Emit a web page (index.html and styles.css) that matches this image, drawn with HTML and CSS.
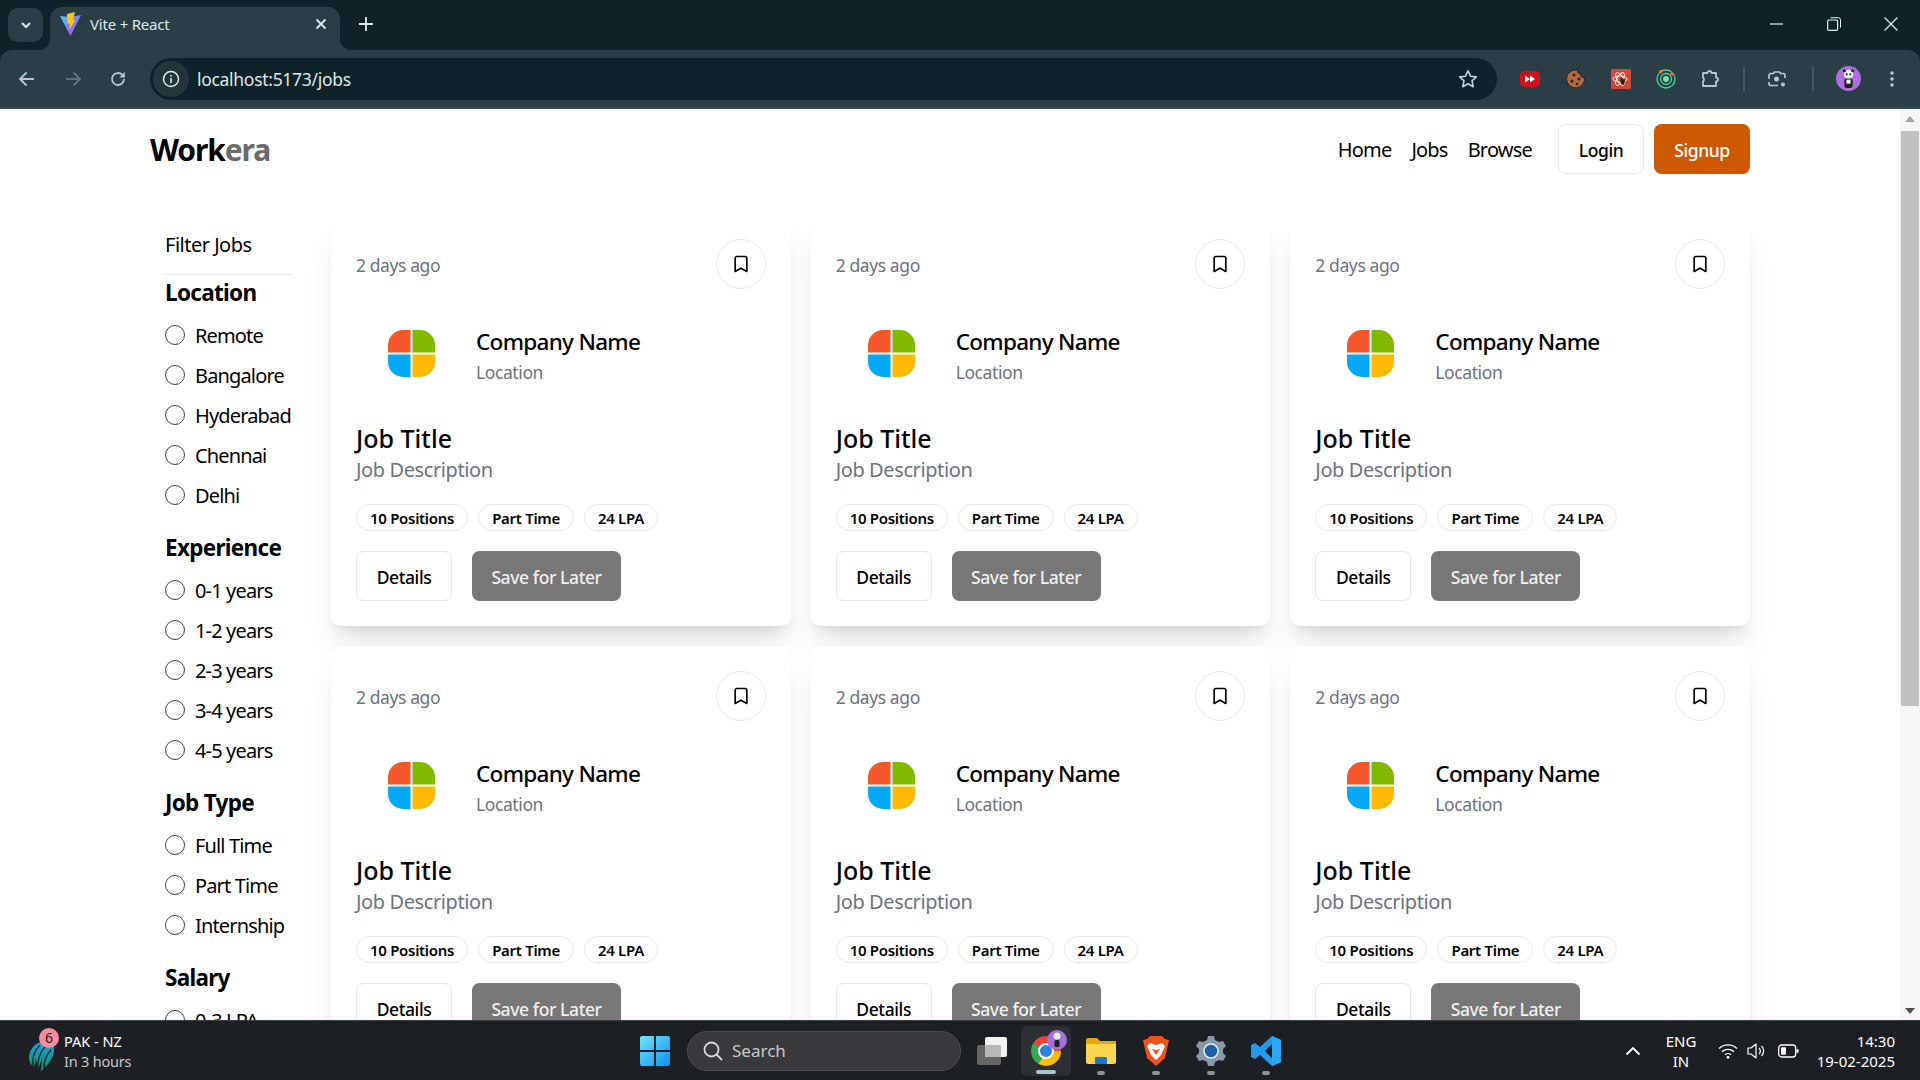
FILE: index.html
```html
<!DOCTYPE html>
<html>
<head>
  <title>Vite + React</title>
  <link rel="stylesheet" href="styles.css">
</head>
<body>
  <svg class="defs" width="0" height="0">
    <defs>
      <clipPath id="logo-clip"><rect width="47" height="47" rx="15"/></clipPath>
      <symbol id="logo" viewBox="0 0 47 47">
        <g clip-path="url(#logo-clip)">
          <rect width="22.5" height="22.5" fill="#f4572a"/>
          <rect x="24.5" width="22.5" height="22.5" fill="#7fba00"/>
          <rect y="24.5" width="22.5" height="22.5" fill="#03a9f4"/>
          <rect x="24.5" y="24.5" width="22.5" height="22.5" fill="#ffb900"/>
        </g>
      </symbol>
      <symbol id="bookmark" viewBox="0 0 24 24">
        <path d="m19 21-7-4-7 4V5a2 2 0 0 1 2-2h10a2 2 0 0 1 2 2v16z" fill="none" stroke="#000" stroke-width="2" stroke-linejoin="round"/>
      </symbol>
    </defs>
  </svg>

  <!-- browser top -->
  <div class="tabstrip">
    <div class="tab-search">
      <svg width="14" height="14" viewBox="0 0 14 14"><path d="M3 5l4 4 4-4" fill="none" stroke="#dfe8ea" stroke-width="2"/></svg>
    </div>
    <div class="tab">
      <svg class="favicon" width="21" height="24" viewBox="0 0 21 24">
        <defs>
          <linearGradient id="vite" x1="0" y1="0" x2="1" y2="1"><stop offset="0" stop-color="#41d1ff"/><stop offset="1" stop-color="#bd34fe"/></linearGradient>
        </defs>
        <path d="M0 4l10.5 20L21 3 10.5 5z" fill="url(#vite)"/>
        <path d="M15 0L7 2l.5 10 2.5-.5-.5 6L15.500 8l-2.500.5z" fill="#ffc517"/>
      </svg>
      <span class="tab-title">Vite + React</span>
      <svg class="tab-close" width="12" height="12" viewBox="0 0 12 12"><path d="M1.500 1.500l9 9m0-9l-9 9" stroke="#dfe8ea" stroke-width="1.800"/></svg>
    </div>
    <svg class="new-tab" width="14" height="14" viewBox="0 0 14 14"><path d="M7 0v14M0 7h14" stroke="#dfe8ea" stroke-width="1.800"/></svg>
    <div class="window-btns">
      <svg width="14" height="14" viewBox="0 0 14 14"><path d="M0 7h13" stroke="#e6eeef" stroke-width="1.200"/></svg>
      <svg width="14" height="14" viewBox="0 0 14 14"><rect x=".6" y="3" width="10" height="10.400" rx="1.500" fill="none" stroke="#e6eeef" stroke-width="1.200"/><path d="M3.500 .7h8a2 2 0 0 1 2 2v8" fill="none" stroke="#e6eeef"/></svg>
      <svg width="14" height="14" viewBox="0 0 14 14"><path d="M.5.500l13 13m0-13l-13 13" stroke="#e6eeef" stroke-width="1.200"/></svg>
    </div>
  </div>

  <div class="toolbar">
    <div class="nav-btns">
      <svg width="18" height="18" viewBox="0 0 18 18"><path d="M16 9H2m6.500-6.500L2 9l6.500 6.500" fill="none" stroke="#b9c7ca" stroke-width="1.800"/></svg>
      <svg width="18" height="18" viewBox="0 0 18 18"><path d="M2 9h14M9.500 2.500L16 9l-6.500 6.500" fill="none" stroke="#5f7277" stroke-width="1.800"/></svg>
      <svg width="18" height="18" viewBox="0 0 18 18"><path d="M15 9a6 6 0 1 1-1.800-4.300L15 6.500" fill="none" stroke="#b9c7ca" stroke-width="1.800"/><path d="M15.800 2v5.500h-5.500z" fill="#b9c7ca"/></svg>
    </div>
    <div class="omnibox">
      <div class="site-info">
        <svg width="18" height="18" viewBox="0 0 18 18"><circle cx="9" cy="9" r="7.500" fill="none" stroke="#dfe8ea" stroke-width="1.500"/><path d="M9 8v5M9 5v1.600" stroke="#dfe8ea" stroke-width="1.600"/></svg>
      </div>
      <span class="url">localhost:5173/jobs</span>
      <svg class="star" width="20" height="20" viewBox="0 0 20 20"><path d="M10 1.800l2.500 5.400 5.800.7-4.300 4 1.200 5.800-5.200-2.900-5.200 2.900 1.200-5.800-4.300-4 5.800-.7z" fill="none" stroke="#c6d3d6" stroke-width="1.600" stroke-linejoin="round"/></svg>
    </div>
    <div class="ext-icons">
      <svg width="22" height="18" viewBox="0 0 22 18"><rect x="1" y="1" width="20" height="16" rx="5" fill="#d3111c"/><path d="M6 5.500l5 3.500-5 3.500zM11 5.500l5 3.500-5 3.500z" fill="#fff"/></svg>
      <svg width="20" height="20" viewBox="0 0 20 20"><path d="M11 1a4 4 0 0 0 3.500 4 3 3 0 0 0 4 3.500A9 9 0 1 1 11 1z" fill="#b5683f" stroke="#1d1d1d" stroke-width=".8"/><circle cx="8" cy="6" r="1.500" fill="#222"/><circle cx="13" cy="10" r="1.500" fill="#222"/><circle cx="6" cy="12" r="1.500" fill="#222"/><circle cx="11" cy="15" r="1.300" fill="#222"/></svg>
      <svg width="20" height="20" viewBox="0 0 20 20"><rect width="20" height="20" rx="1.500" fill="#d4483a"/><g fill="none" stroke="#fff" stroke-width=".9"><ellipse cx="9" cy="10" rx="7" ry="3"/><ellipse cx="9" cy="10" rx="7" ry="3" transform="rotate(60 9 10)"/><ellipse cx="9" cy="10" rx="7" ry="3" transform="rotate(120 9 10)"/></g><path d="M10 8l4 3-1 5-3-1-1-4z" fill="#2a2020"/></svg>
      <svg width="20" height="20" viewBox="0 0 20 20"><circle cx="10" cy="10" r="9" fill="none" stroke="#4ed39a" stroke-width="1.300"/><circle cx="10" cy="10" r="5.500" fill="none" stroke="#4ed39a" stroke-width="1.300"/><circle cx="10" cy="10" r="3" fill="#6ce9ad"/><circle cx="5" cy="2.500" r="1.800" fill="#f0792b"/><circle cx="15.500" cy="5" r="1.800" fill="#ea5a2e"/></svg>
      <svg width="20" height="20" viewBox="0 0 20 20"><path d="M2 4h4.500a2 2 0 0 1 4 0H15v4.500a2 2 0 0 1 0 4V17H2v-4.500a2.500 2.500 0 0 0 0-4z" fill="none" stroke="#b9c7ca" stroke-width="1.800" stroke-linejoin="round"/></svg>
      <span class="ext-divider"></span>
      <svg class="ext-lens" width="20" height="20" viewBox="0 0 20 20"><path d="M2 10V6.500A2 2 0 0 1 4 4.500h2.500l1-1.500h5l1 1.500H16a2 2 0 0 1 2 2V9M2 13v1.500a2 2 0 0 0 2 2h7" fill="none" stroke="#b9c7ca" stroke-width="1.700"/><circle cx="9.500" cy="10" r="2.500" fill="#b9c7ca"/><circle cx="16" cy="15.500" r="2" fill="#b9c7ca"/></svg>
      <span class="ext-divider"></span>
      <div class="avatar">
        <svg width="25" height="25" viewBox="0 0 24 24"><circle cx="12" cy="8" r="4.500" fill="#f2f2f2"/><circle cx="8" cy="4.500" r="1.500" fill="#222"/><circle cx="16" cy="4.500" r="1.500" fill="#222"/><circle cx="10.300" cy="8" r="1" fill="#222"/><circle cx="13.700" cy="8" r="1" fill="#222"/><rect x="8" y="12" width="8" height="9" rx="2" fill="#222"/><rect x="10" y="13" width="4" height="4" fill="#eee"/></svg>
      </div>
      <svg class="ext-menu" width="4" height="18" viewBox="0 0 4 18"><circle cx="2" cy="3" r="1.800" fill="#b9c7ca"/><circle cx="2" cy="9" r="1.800" fill="#b9c7ca"/><circle cx="2" cy="15" r="1.800" fill="#b9c7ca"/></svg>
    </div>
  </div>

  <!-- page -->
  <div class="viewport">
    <div class="page">
      <nav class="navbar">
        <h1 class="brand">Work<span>era</span></h1>
        <ul class="nav-links">
          <li>Home</li>
          <li>Jobs</li>
          <li>Browse</li>
        </ul>
        <button class="btn btn-login">Login</button>
        <button class="btn btn-signup">Signup</button>
      </nav>

      <div class="main">
        <aside class="sidebar">
          <p class="filter-title">Filter Jobs</p>
          <hr class="filter-rule">
          <div class="filter-group">
            <h2>Location</h2>
            <label><input type="radio" name="location">Remote</label>
            <label><input type="radio" name="location">Bangalore</label>
            <label><input type="radio" name="location">Hyderabad</label>
            <label><input type="radio" name="location">Chennai</label>
            <label><input type="radio" name="location">Delhi</label>
          </div>
          <div class="filter-group">
            <h2>Experience</h2>
            <label><input type="radio" name="experience">0-1 years</label>
            <label><input type="radio" name="experience">1-2 years</label>
            <label><input type="radio" name="experience">2-3 years</label>
            <label><input type="radio" name="experience">3-4 years</label>
            <label><input type="radio" name="experience">4-5 years</label>
          </div>
          <div class="filter-group">
            <h2>Job Type</h2>
            <label><input type="radio" name="type">Full Time</label>
            <label><input type="radio" name="type">Part Time</label>
            <label><input type="radio" name="type">Internship</label>
          </div>
          <div class="filter-group">
            <h2>Salary</h2>
            <label><input type="radio" name="salary">0-3 LPA</label>
          </div>
        </aside>

        <div class="jobs-grid">
          <div class="job-card">
            <div class="card-top">
              <span class="posted">2 days ago</span>
              <button class="save-icon"><svg width="20" height="20"><use href="#bookmark"/></svg></button>
            </div>
            <div class="company">
              <svg class="company-logo" width="47" height="47"><use href="#logo"/></svg>
              <div>
                <h3 class="company-name">Company Name</h3>
                <p class="company-loc">Location</p>
              </div>
            </div>
            <h2 class="job-title">Job Title</h2>
            <p class="job-desc">Job Description</p>
            <div class="badges">
              <span class="badge">10 Positions</span>
              <span class="badge">Part Time</span>
              <span class="badge">24 LPA</span>
            </div>
            <div class="card-actions">
              <button class="btn btn-details">Details</button>
              <button class="btn btn-save">Save for Later</button>
            </div>
          </div>

          <div class="job-card">
            <div class="card-top">
              <span class="posted">2 days ago</span>
              <button class="save-icon"><svg width="20" height="20"><use href="#bookmark"/></svg></button>
            </div>
            <div class="company">
              <svg class="company-logo" width="47" height="47"><use href="#logo"/></svg>
              <div>
                <h3 class="company-name">Company Name</h3>
                <p class="company-loc">Location</p>
              </div>
            </div>
            <h2 class="job-title">Job Title</h2>
            <p class="job-desc">Job Description</p>
            <div class="badges">
              <span class="badge">10 Positions</span>
              <span class="badge">Part Time</span>
              <span class="badge">24 LPA</span>
            </div>
            <div class="card-actions">
              <button class="btn btn-details">Details</button>
              <button class="btn btn-save">Save for Later</button>
            </div>
          </div>

          <div class="job-card">
            <div class="card-top">
              <span class="posted">2 days ago</span>
              <button class="save-icon"><svg width="20" height="20"><use href="#bookmark"/></svg></button>
            </div>
            <div class="company">
              <svg class="company-logo" width="47" height="47"><use href="#logo"/></svg>
              <div>
                <h3 class="company-name">Company Name</h3>
                <p class="company-loc">Location</p>
              </div>
            </div>
            <h2 class="job-title">Job Title</h2>
            <p class="job-desc">Job Description</p>
            <div class="badges">
              <span class="badge">10 Positions</span>
              <span class="badge">Part Time</span>
              <span class="badge">24 LPA</span>
            </div>
            <div class="card-actions">
              <button class="btn btn-details">Details</button>
              <button class="btn btn-save">Save for Later</button>
            </div>
          </div>

          <div class="job-card">
            <div class="card-top">
              <span class="posted">2 days ago</span>
              <button class="save-icon"><svg width="20" height="20"><use href="#bookmark"/></svg></button>
            </div>
            <div class="company">
              <svg class="company-logo" width="47" height="47"><use href="#logo"/></svg>
              <div>
                <h3 class="company-name">Company Name</h3>
                <p class="company-loc">Location</p>
              </div>
            </div>
            <h2 class="job-title">Job Title</h2>
            <p class="job-desc">Job Description</p>
            <div class="badges">
              <span class="badge">10 Positions</span>
              <span class="badge">Part Time</span>
              <span class="badge">24 LPA</span>
            </div>
            <div class="card-actions">
              <button class="btn btn-details">Details</button>
              <button class="btn btn-save">Save for Later</button>
            </div>
          </div>

          <div class="job-card">
            <div class="card-top">
              <span class="posted">2 days ago</span>
              <button class="save-icon"><svg width="20" height="20"><use href="#bookmark"/></svg></button>
            </div>
            <div class="company">
              <svg class="company-logo" width="47" height="47"><use href="#logo"/></svg>
              <div>
                <h3 class="company-name">Company Name</h3>
                <p class="company-loc">Location</p>
              </div>
            </div>
            <h2 class="job-title">Job Title</h2>
            <p class="job-desc">Job Description</p>
            <div class="badges">
              <span class="badge">10 Positions</span>
              <span class="badge">Part Time</span>
              <span class="badge">24 LPA</span>
            </div>
            <div class="card-actions">
              <button class="btn btn-details">Details</button>
              <button class="btn btn-save">Save for Later</button>
            </div>
          </div>

          <div class="job-card">
            <div class="card-top">
              <span class="posted">2 days ago</span>
              <button class="save-icon"><svg width="20" height="20"><use href="#bookmark"/></svg></button>
            </div>
            <div class="company">
              <svg class="company-logo" width="47" height="47"><use href="#logo"/></svg>
              <div>
                <h3 class="company-name">Company Name</h3>
                <p class="company-loc">Location</p>
              </div>
            </div>
            <h2 class="job-title">Job Title</h2>
            <p class="job-desc">Job Description</p>
            <div class="badges">
              <span class="badge">10 Positions</span>
              <span class="badge">Part Time</span>
              <span class="badge">24 LPA</span>
            </div>
            <div class="card-actions">
              <button class="btn btn-details">Details</button>
              <button class="btn btn-save">Save for Later</button>
            </div>
          </div>
        </div>
      </div>
    </div>

    <div class="scrollbar">
      <span class="arrow-up"></span>
      <div class="scroll-track"><div class="scroll-thumb"></div></div>
      <span class="arrow-down"></span>
    </div>
  </div>

  <!-- windows taskbar -->
  <div class="taskbar">
    <div class="task-news">
      <div class="news-icon">
        <svg width="28" height="36" viewBox="0 0 28 36">
          <defs><linearGradient id="icc" x1="0" y1="0" x2="0" y2="1"><stop offset="0" stop-color="#1aa3e8"/><stop offset="1" stop-color="#0f8f5f"/></linearGradient></defs>
          <path d="M2 22C2 12 10 5 20 5c6 0 8 4 7 10-1 8-8 16-13 20l1-13-4 12-2-12-2 9c-3-2-5-5-5-9z" fill="url(#icc)"/>
          <path d="M6 30C5 22 8 14 13 9M11 33c-1-8 2-17 7-22M17 32c0-7 3-14 7-18" fill="none" stroke="#1c1f24" stroke-width="1.400"/>
        </svg>
        <span class="news-badge">6</span>
      </div>
      <div class="news-text">
        <span>PAK - NZ</span>
        <span class="news-sub">In 3 hours</span>
      </div>
    </div>

    <div class="task-center">
      <svg class="task-win" width="30" height="30" viewBox="0 0 30 30">
        <defs><linearGradient id="win" x1="0" y1="0" x2="1" y2="1"><stop offset="0" stop-color="#6fe3fb"/><stop offset="1" stop-color="#0f92f2"/></linearGradient></defs>
        <path d="M0 2a2 2 0 0 1 2-2h12v14H0zM16 0h12a2 2 0 0 1 2 2v12H16zM0 16h14v14H2a2 2 0 0 1-2-2zM16 16h14v12a2 2 0 0 1-2 2H16z" fill="url(#win)"/>
      </svg>
      <div class="task-search">
        <svg width="22" height="22" viewBox="0 0 22 22"><circle cx="9.500" cy="9.500" r="7" fill="none" stroke="#d8d8d8" stroke-width="1.800"/><path d="M14.500 14.500l5.500 5.500" stroke="#d8d8d8" stroke-width="1.800"/></svg>
        <span>Search</span>
      </div>
      <svg class="task-view" width="30" height="28" viewBox="0 0 30 28"><rect y="8" width="24" height="20" rx="2" fill="#666"/><rect x="8" width="22" height="20" rx="2" fill="#f2f2f2"/><rect x="8" y="8" width="16" height="12" rx="1" fill="#b8b8b8"/></svg>
      <div class="task-chrome">
        <div class="chrome-logo"><span></span></div>
        <div class="chrome-badge">
          <svg width="20" height="20" viewBox="0 0 20 20"><circle cx="10" cy="6" r="3.500" fill="#e8e8e8"/><rect x="7.500" y="10" width="5" height="7" rx="1.500" fill="#222"/></svg>
        </div>
        <i class="task-active"></i>
      </div>
      <div class="task-app">
        <svg width="30" height="26" viewBox="0 0 30 26"><path d="M0 2a2 2 0 0 1 2-2h9l3 3h16v8H0z" fill="#e2a711"/><path d="M0 6h30v18a2 2 0 0 1-2 2H2a2 2 0 0 1-2-2z" fill="#ffd54f"/><rect x="9" y="19" width="12" height="7" rx="1" fill="#1976c9"/></svg>
        <i class="task-dot"></i>
      </div>
      <div class="task-app">
        <svg width="26" height="30" viewBox="0 0 26 30"><path d="M7 0h12l3 3 4 1-2 9-2 9-9 8-9-8-2-9-2-9 4-1z" fill="#f1511b"/><path d="M7 7l6 2 6-2 3 3-4 9-5 5-5-5-4-9z" fill="#fff"/><path d="M9 13l4 1 4-1-4 6z" fill="#f1511b"/></svg>
        <i class="task-dot"></i>
      </div>
      <div class="task-app">
        <svg width="30" height="30" viewBox="0 0 30 30"><path d="M12 0h6l1 4 4 2 4-1 3 5-3 3v4l3 3-3 5-4-1-4 2-1 4h-6l-1-4-4-2-4 1-3-5 3-3v-4L0 10l3-5 4 1 4-2z" fill="#8a97a6"/><circle cx="15" cy="15" r="7" fill="#1d5fa8"/><circle cx="15" cy="15" r="7" fill="none" stroke="#e8eef2" stroke-width="1.500"/></svg>
        <i class="task-dot"></i>
      </div>
      <div class="task-app">
        <svg width="30" height="30" viewBox="0 0 30 30"><path d="M21 0l9 4v22l-9 4-12-11-5 4-4-2V9l4-2 5 4zM21 8l-7 7 7 7z" fill="#1f9cf0"/><path d="M21 0l9 4v22l-9 4z" fill="#2aa8f5"/><path d="M21 8l-7 7 7 7z" fill="#1c1f24"/></svg>
        <i class="task-dot"></i>
      </div>
    </div>

    <div class="task-tray">
      <svg width="16" height="10" viewBox="0 0 16 10"><path d="M1.500 8.500L8 2l6.500 6.500" fill="none" stroke="#fff" stroke-width="1.800"/></svg>
      <div class="tray-lang"><span>ENG</span><span>IN</span></div>
      <svg class="tray-wifi" width="20" height="16" viewBox="0 0 20 16"><path d="M1 5.500a13 13 0 0 1 18 0M4 8.700a9 9 0 0 1 12 0M7 11.700a4.500 4.500 0 0 1 6 0" fill="none" stroke="#fff" stroke-width="1.400"/><circle cx="10" cy="14.300" r="1.400" fill="#fff"/></svg>
      <svg class="tray-sound" width="20" height="16" viewBox="0 0 20 16"><path d="M1 5h3l5-4v14l-5-4H1z" fill="none" stroke="#fff" stroke-width="1.200" stroke-linejoin="round"/><path d="M12 5a4 4 0 0 1 0 6M14.500 3a7 7 0 0 1 0 10" fill="none" stroke="#fff" stroke-width="1.200"/></svg>
      <svg class="tray-batt" width="21" height="14" viewBox="0 0 21 14"><rect x=".7" y="1" width="17" height="12" rx="3" fill="none" stroke="#fff" stroke-width="1.300"/><rect x="3" y="3.300" width="5" height="7.400" rx="1" fill="#fff"/><rect x="18.500" y="5" width="2" height="4" rx="1" fill="#fff"/></svg>
      <div class="tray-clock"><span>14:30</span><span>19-02-2025</span></div>
    </div>
  </div>
</body>
</html>
```

FILE: styles.css
```css
* {
  box-sizing: border-box;
}

html, body {
  margin: 0;
  height: 1080px;
  overflow: hidden;
}

body {
  display: flex;
  flex-direction: column;
  font-family: "Noto Sans", "Open Sans", sans-serif;
  background-color: #0d2328;
  color: #000;
}

.defs {
  position: absolute;
}

h1, h2, h3, p, ul {
  margin: 0;
  padding: 0;
}

button {
  font-family: inherit;
  cursor: pointer;
}

/* browser top */
.tabstrip {
  height: 50px;
  flex-shrink: 0;
  display: flex;
  align-items: flex-end;
  padding-left: 8px;
}

.tab-search {
  width: 35px;
  height: 34px;
  margin-bottom: 8px;
  border-radius: 10px;
  background-color: #2a3f45;
  display: flex;
  align-items: center;
  justify-content: center;
}

.tab {
  position: relative;
  width: 290px;
  height: 43px;
  margin-left: 7px;
  padding: 0 13px 9px 10px;
  border-radius: 12px 12px 0 0;
  background-color: #2a3f45;
  display: flex;
  align-items: center;
  color: #dfe8ea;
  font-size: 15px;
  letter-spacing: -0.2px;
}

.tab::before, .tab::after {
  content: "";
  position: absolute;
  bottom: 0;
  width: 12px;
  height: 12px;
}

.tab::before {
  left: -12px;
  background: radial-gradient(circle at 0 0, transparent 12px, #2a3f45 12.500px);
}

.tab::after {
  right: -12px;
  background: radial-gradient(circle at 100% 0, transparent 12px, #2a3f45 12.500px);
}

.tab-title {
  margin-left: 9px;
  flex: 1;
}

.new-tab {
  margin: 0 0 19px 19px;
}

.window-btns {
  margin-left: auto;
  width: 150px;
  align-self: flex-start;
  padding: 17px 22px 0 0;
  display: flex;
  justify-content: space-between;
}

.toolbar {
  height: 59px;
  flex-shrink: 0;
  border-radius: 12px 12px 0 0;
  border-bottom: 2px solid #334a50;
  background-color: #2a3f45;
  display: flex;
  align-items: center;
}

.nav-btns {
  width: 150px;
  padding: 0 23px 0 18px;
  display: flex;
  justify-content: space-between;
}

.omnibox {
  width: 1347px;
  height: 42px;
  border-radius: 21px;
  background-color: #0e2329;
  display: flex;
  align-items: center;
  padding-right: 19px;
  color: #dfe8ea;
}

.site-info {
  width: 36px;
  height: 36px;
  margin-left: 3px;
  border-radius: 50%;
  background-color: #22363b;
  display: flex;
  align-items: center;
  justify-content: center;
}

.url {
  margin-left: 8px;
  font-size: 17.500px;
  letter-spacing: -0.3px;
  flex: 1;
}

.ext-icons {
  padding-left: 22px;
  display: flex;
  align-items: center;
  gap: 25px;
}

.ext-divider {
  width: 2px;
  height: 24px;
  margin: 0 -3px;
  background-color: #42585e;
}

.ext-lens {
  margin-right: 3px;
}

.avatar {
  width: 25px;
  height: 25px;
  border-radius: 50%;
  background-color: #b06fe0;
  overflow: hidden;
}

.ext-menu {
  margin-left: 4px;
}

/* page */
.viewport {
  height: 911px;
  flex-shrink: 0;
  display: flex;
  background-color: #fff;
}

.page {
  flex: 1;
  overflow: hidden;
  padding: 0 150px;
}

.navbar {
  height: 80px;
  display: flex;
  align-items: center;
}

.brand {
  flex: 1;
  font-size: 30px;
  font-weight: 700;
  letter-spacing: -1.100px;
}

.brand span {
  color: #6b6b6b;
}

.nav-links {
  list-style: none;
  display: flex;
  gap: 20px;
  margin-right: 26px;
  font-size: 20px;
  letter-spacing: -0.8px;
}

.btn {
  height: 50px;
  padding: 2px 0 0;
  border-radius: 7.500px;
  border: 1px solid #e5e7eb;
  background-color: #fff;
  color: #000;
  font-size: 17.500px;
  font-weight: 500;
  letter-spacing: -0.4px;
}

.btn-login {
  width: 86px;
}

.btn-signup {
  width: 96px;
  margin-left: 10px;
  border: none;
  background-color: #cc5803;
  color: #fff;
}

.main {
  margin-top: 25px;
  display: flex;
}

.sidebar {
  width: 181px;
  flex-shrink: 0;
  padding: 16px 0 0 15px;
}

.filter-title {
  font-size: 20px;
  line-height: 30px;
  letter-spacing: -0.5px;
}

.filter-rule {
  width: 126px;
  height: 1px;
  margin: 14px 0 3px;
  border: none;
  background-color: #e5e7eb;
}

.filter-group {
  margin-bottom: 18px;
}

.filter-group h2 {
  font-size: 22.500px;
  font-weight: 700;
  line-height: 30px;
  margin-bottom: 7px;
  letter-spacing: -0.7px;
}

.filter-group label {
  height: 40px;
  display: flex;
  align-items: center;
  gap: 10px;
  font-size: 20px;
  letter-spacing: -0.85px;
  white-space: nowrap;
}

.filter-group input {
  appearance: none;
  width: 20px;
  height: 20px;
  margin: 0;
  border: 1.500px solid #3a3f4b;
  border-radius: 50%;
  flex-shrink: 0;
}

.jobs-grid {
  flex: 1;
  display: grid;
  grid-template-columns: repeat(3, 1fr);
  gap: 20px;
}

.job-card {
  height: 412px;
  padding: 25px;
  border-radius: 10px;
  background-color: #fff;
  box-shadow: 0 25px 31px -6px rgba(0, 0, 0, 0.1), 0 10px 12px -7px rgba(0, 0, 0, 0.1);
}

.card-top {
  display: flex;
  align-items: center;
  justify-content: space-between;
}

.posted {
  font-size: 17.500px;
  color: #6b7280;
  margin-top: 2px;
  letter-spacing: -0.4px;
}

.save-icon {
  width: 50px;
  height: 50px;
  padding: 0;
  border: 1px solid #e5e7eb;
  border-radius: 50%;
  background-color: #fff;
  display: flex;
  align-items: center;
  justify-content: center;
}

.company {
  margin-top: 38px;
  display: flex;
  align-items: flex-start;
}

.company-logo {
  margin: 3px 41px 0 32px;
  flex-shrink: 0;
}

.company-name {
  font-size: 22.500px;
  font-weight: 500;
  line-height: 30px;
  letter-spacing: -0.7px;
}

.company-loc {
  margin-top: 3px;
  font-size: 17.500px;
  line-height: 25px;
  letter-spacing: -0.4px;
  color: #6b7280;
}

.job-title {
  margin-top: 36px;
  font-size: 25px;
  font-weight: 500;
  line-height: 35px;
}

.job-desc {
  font-size: 20px;
  line-height: 28px;
  letter-spacing: -0.4px;
  color: #6b7280;
}

.badges {
  margin-top: 20px;
  display: flex;
  gap: 10px;
}

.badge {
  height: 27px;
  padding: 0 13px;
  border: 1px solid #e5e7eb;
  border-radius: 14px;
  font-size: 15px;
  font-weight: 600;
  line-height: 26px;
  letter-spacing: -0.3px;
}

.card-actions {
  margin-top: 20px;
  display: flex;
  gap: 20px;
}

.btn-details {
  width: 96px;
}

.btn-save {
  width: 149px;
  border: none;
  background-color: #777;
  color: #f0f0f0;
}

.scrollbar {
  width: 20px;
  flex-shrink: 0;
  background-color: #f6f6f6;
  display: flex;
  flex-direction: column;
  align-items: center;
}

.arrow-up, .arrow-down {
  height: 5px;
  width: 0;
  border-left: 5px solid transparent;
  border-right: 5px solid transparent;
}

.arrow-up {
  margin-top: 7px;
  border-bottom: 6px solid #a3a3a3;
}

.scroll-track {
  flex: 1;
  width: 100%;
  padding: 9px 1px 0;
}

.scroll-thumb {
  height: 575px;
  background-color: #c1c1c1;
}

.arrow-down {
  margin-bottom: 6px;
  border-top: 6px solid #505050;
}

/* windows taskbar */
.taskbar {
  height: 60px;
  flex-shrink: 0;
  border-top: 1px solid #3b3d40;
  background-color: #1c1f24;
  color: #fff;
  display: flex;
  align-items: center;
  font-size: 15px;
}

.task-news {
  width: 640px;
  padding-left: 27px;
  display: flex;
  align-items: center;
}

.news-icon {
  position: relative;
  width: 37px;
  height: 36px;
  margin-top: 6px;
}

.news-badge {
  position: absolute;
  top: -8px;
  left: 12px;
  width: 20px;
  height: 20px;
  border-radius: 50%;
  background-color: #fb8b9b;
  color: #1c1f24;
  font-size: 14px;
  line-height: 20px;
  text-align: center;
}

.news-text {
  display: flex;
  flex-direction: column;
  line-height: 20px;
  font-size: 14.500px;
}

.news-sub {
  color: #c8c8c8;
  letter-spacing: -0.2px;
}

.task-center {
  width: 960px;
  display: flex;
  align-items: center;
}

.task-search {
  width: 274px;
  height: 40px;
  margin-left: 17px;
  padding-left: 14px;
  border: 1px solid #4a4b4f;
  border-radius: 20px;
  background-color: #38393d;
  color: #c8c8c8;
  display: flex;
  align-items: center;
  gap: 8px;
  font-size: 17px;
}

.task-view {
  margin-left: 16px;
}

.task-chrome {
  position: relative;
  width: 50px;
  height: 50px;
  margin-left: 14px;
  border-radius: 5px;
  background-color: #2c2f33;
  display: flex;
  align-items: center;
  justify-content: center;
}

.chrome-logo {
  width: 30px;
  height: 30px;
  border-radius: 50%;
  background: conic-gradient(#ea4335 0 90deg, #fbbc04 90deg 210deg, #34a853 210deg 300deg, #ea4335 300deg);
  display: flex;
  align-items: center;
  justify-content: center;
}

.chrome-logo span {
  width: 16px;
  height: 16px;
  border: 2px solid #fff;
  border-radius: 50%;
  background-color: #2f7fe8;
}

.chrome-badge {
  position: absolute;
  top: 4px;
  right: 4px;
  width: 20px;
  height: 20px;
  border-radius: 50%;
  background-color: #a86fd6;
}

.task-active {
  position: absolute;
  bottom: 2px;
  left: 15px;
  width: 20px;
  height: 4px;
  border-radius: 2px;
  background-color: #a9c6cf;
}

.task-app {
  position: relative;
  width: 30px;
  height: 50px;
  margin-left: 15px;
  display: flex;
  align-items: center;
  justify-content: center;
}

.task-app + .task-app {
  margin-left: 25px;
}

.task-dot {
  position: absolute;
  bottom: 1px;
  left: 11px;
  width: 8px;
  height: 4px;
  border-radius: 2px;
  background-color: #8f9296;
}

.task-tray {
  flex: 1;
  display: flex;
  align-items: center;
  padding-left: 25px;
}

.tray-lang {
  width: 40px;
  margin-left: 20px;
  display: flex;
  flex-direction: column;
  align-items: center;
  line-height: 20px;
  font-size: 15px;
}

.tray-wifi {
  margin-left: 17px;
}

.tray-sound {
  margin-left: 9px;
}

.tray-batt {
  margin-left: 11px;
}

.tray-clock {
  margin-left: auto;
  padding-right: 25px;
  display: flex;
  flex-direction: column;
  align-items: flex-end;
  line-height: 20px;
  font-size: 15px;
}
```
